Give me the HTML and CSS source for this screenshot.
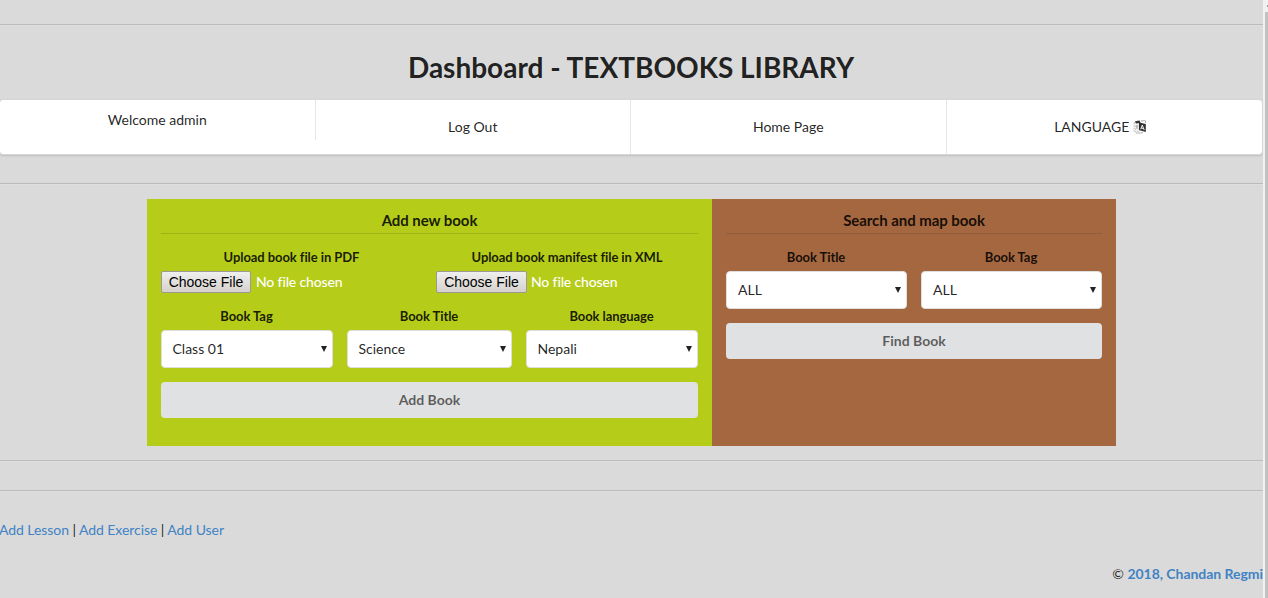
FILE: index.html
```
<!DOCTYPE html>
<html lang="en">
<head>
<meta charset="utf-8">
<title>Dashboard - TEXTBOOKS LIBRARY</title>
<link rel="stylesheet" href="styles.css">
</head>
<body>
<div class="window">
  <main class="page">
    <hr class="divider divider-top">
    <h1 class="title">Dashboard - TEXTBOOKS LIBRARY</h1>
    <nav class="menu">
      <div class="item item-short">Welcome admin</div>
      <a class="item">Log Out</a>
      <a class="item">Home Page</a>
      <a class="item item-language">LANGUAGE
        <svg class="lang-icon" viewBox="0 0 14 14" width="14" height="14">
          <path d="M1 2.5 7 1v10L1 12z" fill="#f1f1f1" stroke="#aaa" stroke-width=".7" stroke-dasharray="1.5 1"/>
          <path d="M2 1.2 6.5.5 7.5 3 3 3.5z" fill="#333"/>
          <path d="M2.5 6h3M4 5v1c0 2-1 3-2 3.5M3 6.5 5.5 9" fill="none" stroke="#999" stroke-width=".7"/>
          <path d="M6 2.5 12.8 4v8L6 10z" fill="#303030"/>
          <path d="M7.7 9.2 9.3 5l1.9 5M8.2 8l2.3.5" fill="none" stroke="#fff" stroke-width=".9"/>
          <path d="M8 .8h4.5V3M3 13h5l2-.8" fill="none" stroke="#999" stroke-width=".8"/>
        </svg>
      </a>
    </nav>
    <hr class="divider divider-menu">
    <div class="panels">
      <section class="panel add">
        <h4 class="heading">Add new book</h4>
        <div class="files">
          <div class="field"><label class="label">Upload book file in PDF</label>
            <div class="file"><span class="choose">Choose File</span><span class="none">No file chosen</span></div></div>
          <div class="field"><label class="label">Upload book manifest file in XML</label>
            <div class="file"><span class="choose choose-wide">Choose File</span><span class="none">No file chosen</span></div></div>
        </div>
        <div class="selects three">
          <div class="field"><label class="label">Book Tag</label><div class="select">Class 01<i class="arrow"></i></div></div>
          <div class="field"><label class="label">Book Title</label><div class="select">Science<i class="arrow"></i></div></div>
          <div class="field"><label class="label">Book language</label><div class="select">Nepali<i class="arrow"></i></div></div>
        </div>
        <div class="button">Add Book</div>
      </section>
      <section class="panel search">
        <h4 class="heading">Search and map book</h4>
        <div class="selects two">
          <div class="field"><label class="label">Book Title</label><div class="select">ALL<i class="arrow"></i></div></div>
          <div class="field"><label class="label">Book Tag</label><div class="select">ALL<i class="arrow"></i></div></div>
        </div>
        <div class="button">Find Book</div>
      </section>
    </div>
    <hr class="divider divider-panels">
    <hr class="divider divider-links">
    <div class="links"><a>Add Lesson</a> | <a>Add Exercise</a> | <a>Add User</a></div>
    <footer class="footer">© <a>2018, Chandan Regmi</a></footer>
  </main>
  <div class="scrollbar"><div class="up"></div><div class="thumb"></div></div>
</div>
</body>
</html>
```
FILE: styles.css
```
* { box-sizing: border-box; }
body {
  margin: 0;
  background: #dadada;
  color: rgba(0, 0, 0, .87);
  font: 14px/20px Lato, "Liberation Sans", sans-serif;
  overflow: hidden;
}
.window { display: flex; height: 598px; overflow: hidden; }
.page { width: 1263px; flex: none; }
.divider {
  height: 2px;
  margin: 0;
  border: 0;
  border-top: 1px solid #bbb;
  border-bottom: 1px solid #dedede;
}
.divider-top { margin-top: 24px; }
.title {
  margin: 23px 1px 14px 0;
  font-size: 28px;
  line-height: 36px;
  font-weight: 700;
  text-align: center;
}
.menu {
  display: flex;
  align-items: flex-start;
  height: 56px;
  margin-left: -1px;
  background: #fff;
  border: 1px solid #d7d7d7;
  border-radius: 4px;
  box-shadow: 0 1px 2px rgba(34, 36, 38, .15);
}
.item {
  display: flex;
  flex: none;
  width: 25%;
  height: 54px;
  align-items: center;
  justify-content: center;
  border-right: 1px solid #e7e7e7;
}
.item:last-child { border-right: 0; }
.item-short { height: 40px; }
.item-language { padding-right: 7px; }
.lang-icon { margin-left: 4px; }
.divider-menu { margin-top: 28px; }
.panels { display: flex; width: 969px; height: 247px; margin: 14px 0 0 147px; }
.panel { padding: 14px; }
.add { width: 565px; background: #b5cc18; }
.search { width: 404px; background: #a5673f; }
.heading {
  margin: 0 0 14px;
  height: 21px;
  padding-bottom: 3px;
  border-bottom: 1px solid rgba(34, 36, 38, .15);
  font-size: 15px;
  line-height: 15px;
  font-weight: 700;
  letter-spacing: -.06px;
  text-align: center;
}
.label {
  display: block;
  height: 19px;
  margin-bottom: 4px;
  font-size: 13px;
  line-height: 18px;
  font-weight: 700;
  letter-spacing: -.07px;
  text-align: center;
}
.files { display: grid; grid-template-columns: 261px 262px; gap: 14px; }
.file { display: flex; height: 22px; align-items: center; }
.choose {
  width: 90px;
  height: 22px;
  border: 1px solid #9d9a96;
  border-radius: 2px;
  background: linear-gradient(#efefef, #d5d1cd);
  color: #000;
  font: 14px/20px "Liberation Sans", Arial, sans-serif;
  text-align: center;
}
.choose-wide { width: 91px; }
.none { margin-left: 5px; color: #fff; font-weight: 500; letter-spacing: -.14px; }
.choose-wide + .none { margin-left: 4px; }
.selects { display: grid; gap: 14px; }
.selects .label { padding-right: 1px; }
.three { grid-template-columns: 172px 165px 172px; margin-top: 14px; }
.two { grid-template-columns: 181px 181px; }
.select {
  display: flex;
  align-items: center;
  justify-content: space-between;
  height: 38px;
  padding: 0 5px 0 11px;
  border: 1px solid #dededf;
  border-radius: 4px;
  background: #fff;
}
.three .select { padding-left: 10.5px; }
.arrow { border: 3px solid transparent; border-top: 6px solid #222; border-bottom: 0; }
.button {
  height: 36px;
  margin-top: 14px;
  border-radius: 4px;
  background: #e0e1e2;
  color: rgba(0, 0, 0, .6);
  font-weight: 700;
  line-height: 36px;
  text-align: center;
}
.divider-panels { margin-top: 14px; }
.divider-links { margin-top: 28px; }
.links { margin: 28px 0 0 -1px; letter-spacing: -.06px; }
a { color: inherit; }
.links a, .footer a { color: #4183c4; }
.footer { margin-top: 24px; text-align: right; letter-spacing: -.04px; }
.footer a { font-weight: 700; }
.scrollbar { width: 5px; padding-left: 2px; background: #f1f1f1; }
.up { width: 2px; height: 2px; margin: 5px 0 5px 2px; background: #999; }
.thumb { height: 586px; background: #c1c1c1; }
```
